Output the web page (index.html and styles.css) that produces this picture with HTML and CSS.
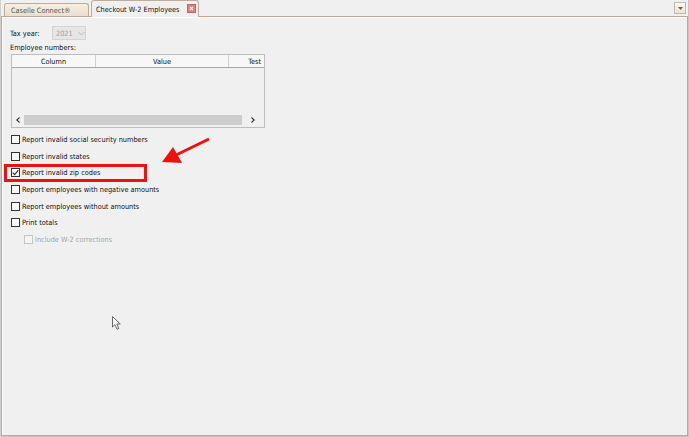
FILE: index.html
```html
<!DOCTYPE html>
<html>
<head>
<meta charset="utf-8">
<link rel="stylesheet" href="styles.css">
</head>
<body>
<div class="window">
  <div class="tabs">
    <div class="tab tab-inactive">Caselle Connect®</div>
    <div class="tab tab-active">Checkout W-2 Employees
      <span class="close"><svg width="9" height="9" viewBox="0 0 9 9"><path d="M2.5 2.5 L6.5 6.5 M6.5 2.5 L2.5 6.5" stroke="#fff" stroke-width="1.3"/></svg></span>
    </div>
    <div class="spacer"></div>
    <div class="menu-btn"><svg width="5" height="3" viewBox="0 0 5 3"><path d="M0 0 H5 L2.5 3 Z" fill="#7a5a50"/></svg></div>
  </div>
  <div class="panel">
    <div class="tax-row">
      <span class="label">Tax year:</span>
      <div class="select">
        <span>2021</span>
        <svg width="7" height="5" viewBox="0 0 7 5"><path d="M0.5 1 L3.5 4 L6.5 1" fill="none" stroke="#b8b8b8" stroke-width="1"/></svg>
      </div>
    </div>
    <div class="label emp-label">Employee numbers:</div>
    <div class="grid">
      <div class="grid-head">
        <div class="col c1">Column</div>
        <div class="col c2">Value</div>
        <div class="col c3">Test</div>
      </div>
      <div class="grid-body"></div>
      <div class="hscroll">
        <span class="arr"><svg width="4" height="6" viewBox="0 0 4 6"><path d="M3.5 0.5 L0.8 3 L3.5 5.5" fill="none" stroke="#333" stroke-width="1.1"/></svg></span>
        <div class="thumb"></div>
        <span class="arr arr-r"><svg width="4" height="6" viewBox="0 0 4 6"><path d="M0.5 0.5 L3.2 3 L0.5 5.5" fill="none" stroke="#333" stroke-width="1.1"/></svg></span>
      </div>
    </div>
    <div class="checks">
      <div class="check"><span class="box"></span>Report invalid social security numbers</div>
      <div class="check"><span class="box"></span>Report invalid states</div>
      <div class="check"><span class="box"><svg width="7" height="7" viewBox="0 0 7 7"><path d="M0.8 3.6 L2.7 5.6 L6.3 1.2" fill="none" stroke="#333" stroke-width="1.1"/></svg></span>Report invalid zip codes</div>
      <div class="check"><span class="box"></span>Report employees with negative amounts</div>
      <div class="check"><span class="box"></span>Report employees without amounts</div>
      <div class="check"><span class="box"></span>Print totals</div>
      <div class="check sub disabled"><span class="box"></span>Include W-2 corrections</div>
    </div>
  </div>
  <div class="highlight"></div>
  <svg class="arrow" width="689" height="437" viewBox="0 0 689 437">
    <line x1="209" y1="139" x2="174" y2="156" stroke="#f01010" stroke-width="3"/>
    <polygon points="162,162 173,147 182,163" fill="#f01010"/>
  </svg>
  <svg class="cursor" width="11" height="15" viewBox="0 0 11 15">
    <path d="M0.5 0.5 L0.5 11 L3 8.6 L5 13.3 L6.8 12.5 L4.9 8 L8.3 8 Z" fill="#fff" stroke="#666" stroke-width="1" stroke-linejoin="round"/>
  </svg>
</div>
</body>
</html>
```

FILE: styles.css
```css
* { box-sizing: border-box; }
html, body { margin: 0; padding: 0; }
body {
  width: 689px;
  height: 437px;
  background: #f0f0f0;
  font-family: "DejaVu Sans Condensed", "Liberation Sans", sans-serif;
  font-size: 7.3px;
  color: #111;
  overflow: hidden;
}
.window {
  position: relative;
  width: 689px;
  height: 437px;
  display: flex;
  flex-direction: column;
  border-right: 1px solid #c4c4c4;
  border-bottom: 1px solid #c4c4c4;
  border-left: 1px solid #d0d0d0;
}
.tabs {
  height: 16px;
  display: flex;
  align-items: flex-end;
  padding-left: 3px;
}
.tab {
  display: flex;
  align-items: center;
  border: 1px solid #bcae98;
  border-bottom: none;
  border-radius: 3px 3px 0 0;
}
.tab-inactive {
  width: 85px;
  height: 13px;
  padding-left: 6px;
  color: #555;
  background: linear-gradient(#f6f0e4, #e9dfcc);
}
.tab-active {
  width: 108px;
  height: 17px;
  margin-left: 2px;
  margin-bottom: -1px;
  padding-left: 4px;
  background: #f0f0f0;
  position: relative;
  z-index: 1;
  color: #111;
}
.close {
  width: 9px;
  height: 9px;
  margin-left: 7px;
  margin-top: -1px;
  background: #e58080;
  border: 1px solid #c86060;
  display: flex;
  align-items: center;
  justify-content: center;
}
.close svg { display: block; }
.spacer { flex: 1; }
.menu-btn {
  width: 12px;
  height: 12px;
  margin-right: 2px;
  margin-bottom: 2px;
  border: 1px solid #c4b8a4;
  background: linear-gradient(#fbf8f0, #ece4d4);
  display: flex;
  align-items: center;
  justify-content: center;
}
.panel {
  flex: 1;
  border: 1px solid #b9aa9c;
  box-shadow: inset 1px 1px 0 #fbfbfb;
  padding: 9px 0 0 8px;
}
.label { color: #111; }
.tax-row {
  height: 14px;
  display: flex;
  align-items: center;
}
.tax-row .label { width: 42px; }
.select {
  width: 34px;
  height: 14px;
  border: 1px solid #d4d4d4;
  background: #e6e6e6;
  display: flex;
  align-items: center;
  gap: 5px;
  padding: 0 0 0 3px;
  color: #a0a0a0;
}
.emp-label {
  height: 14px;
  display: flex;
  align-items: center;
}
.grid {
  width: 254px;
  height: 74px;
  margin-left: 1px;
  border: 1px solid #bdbdbd;
  display: flex;
  flex-direction: column;
  background: #f0f0f0;
}
.grid-head {
  height: 13px;
  display: flex;
  border-bottom: 1px solid #a8a8a8;
  background: #f7f7f7;
}
.col {
  display: flex;
  align-items: center;
  justify-content: center;
  border-right: 1px solid #d0d0d0;
  color: #111;
}
.c1 { width: 84px; }
.c2 { width: 133px; }
.c3 { flex: 1; border-right: none; justify-content: flex-end; padding-right: 3px; }
.grid-body { flex: 1; }
.hscroll {
  height: 12px;
  display: flex;
  align-items: center;
  margin-bottom: 1px;
}
.arr {
  width: 12px;
  display: flex;
  align-items: center;
  justify-content: center;
}
.arr svg { display: block; }
.arr-r { flex: 1; }
.thumb {
  width: 218px;
  height: 10px;
  background: #cdcdcd;
}
.checks {
  margin-top: 3px;
}
.check {
  height: 16.7px;
  display: flex;
  align-items: center;
  margin-left: 1px;
}
.box {
  width: 9px;
  height: 9px;
  border: 1px solid #333;
  background: #fafafa;
  margin-right: 2px;
  display: flex;
  align-items: center;
  justify-content: center;
}
.box svg { display: block; }
.sub { margin-left: 14px; }
.disabled { color: #a6a6a6; }
.disabled .box { border-color: #c4c4c4; background: #f4f4f4; }
.highlight {
  position: absolute;
  left: 3px;
  top: 164px;
  width: 143px;
  height: 18px;
  border: 3px solid #ee1111;
}
.arrow {
  position: absolute;
  left: -1px;
  top: 0;
  pointer-events: none;
}
.cursor {
  position: absolute;
  left: 111px;
  top: 316px;
}
```
